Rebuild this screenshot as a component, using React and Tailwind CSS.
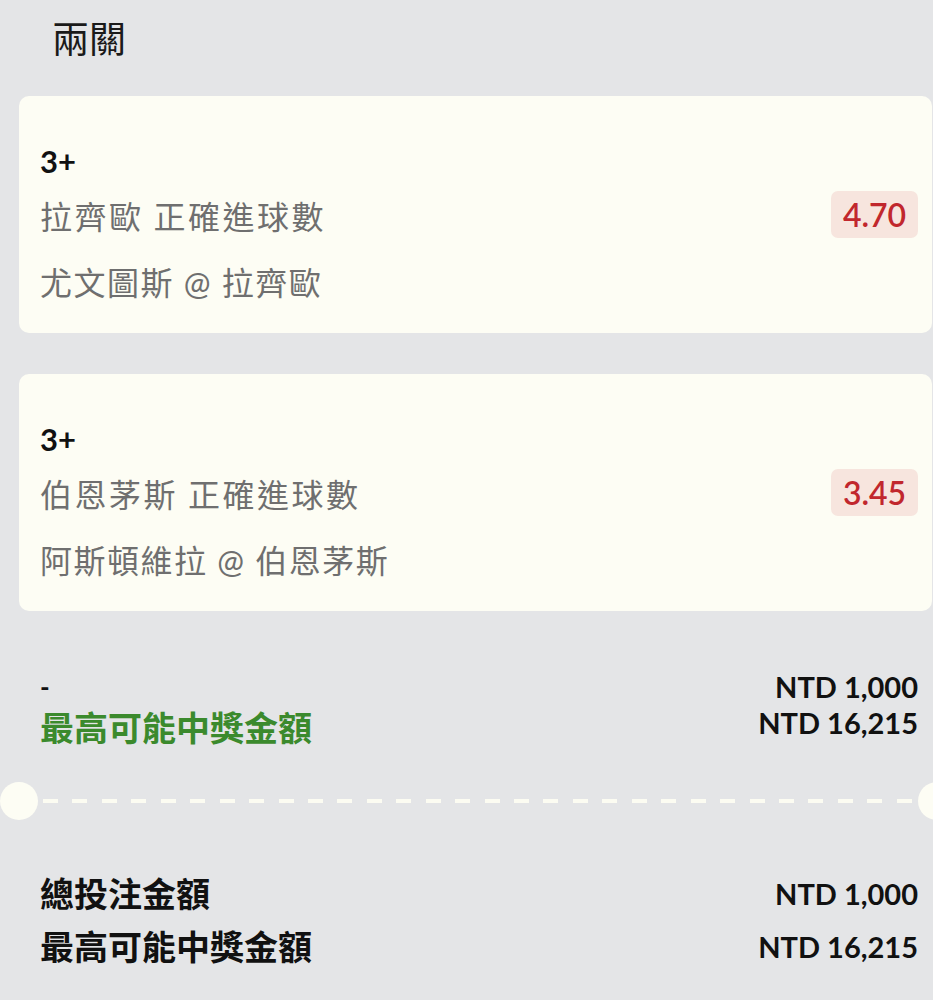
import React from "react";

const font = { fontFamily: 'Lato, "Noto Sans CJK TC", sans-serif' };

function Leg({ team, market, match, odds }) {
  return (
    <div className="ml-[19px] mr-[1px] flex items-center rounded-[10px] bg-[#fdfdf4] pl-[21px] pr-[14px]">
      <div className="flex flex-1 flex-col pt-[45px] pb-[20px]">
        <div className="h-[40px] text-[31px] font-bold leading-[40px] text-[#111111]">3+</div>
        <div className="h-[72px] text-[32px] leading-[72px] tracking-[2.5px] text-[#6f6f6f]">
          <span className="mr-[10px]">{team}</span>
          <span>{market}</span>
        </div>
        <div className="h-[60px] text-[32px] leading-[60px] tracking-[1.5px] text-[#6f6f6f]">{match}</div>
      </div>
      <div className="flex h-[47px] w-[87px] items-center justify-center rounded-[7px] bg-[#f7e5de] text-[32px] font-semibold text-[#c1272d]">
        {odds}
      </div>
    </div>
  );
}

export default function App() {
  const dashes = Array.from({ length: 30 });
  return (
    <div style={font} className="min-h-[1000px] w-full overflow-hidden bg-[#e4e5e7]">
      <div className="flex h-[78px] items-center pl-[52px] text-[37px] text-[#1a1a1a]">兩關</div>
      <div className="mt-[18px]">
        <Leg team="拉齊歐" market="正確進球數" match="尤文圖斯 @ 拉齊歐" odds="4.70" />
      </div>
      <div className="mt-[41px]">
        <Leg team="伯恩茅斯" market="正確進球數" match="阿斯頓維拉 @ 伯恩茅斯" odds="3.45" />
      </div>

      <div className="mt-[56px] pl-[40px] pr-[15px]">
        <div className="flex h-[40px] items-center justify-between">
          <span className="text-[26px] font-bold text-[#111111]">-</span>
          <span className="text-[29px] font-bold text-[#111111]">NTD 1,000</span>
        </div>
        <div className="flex h-[40px] items-center justify-between">
          <span className="text-[34px] font-bold text-[#3b8a2d]">最高可能中獎金額</span>
          <span className="-mt-[8px] text-[29px] font-bold text-[#111111]">NTD 16,215</span>
        </div>
      </div>

      <div className="mt-[35px] flex items-center">
        <div className="h-[38px] w-[38px] shrink-0 rounded-full bg-[#fdfdf4]" />
        <div className="ml-[5px] mr-[6px] flex flex-1 justify-between">
          {dashes.map((_, i) => (
            <div key={i} className="h-[4px] w-[15px] bg-[#fcfcf2]" />
          ))}
        </div>
        <div className="-mr-[23px] h-[38px] w-[38px] shrink-0 rounded-full bg-[#fdfdf4]" />
      </div>

      <div className="mt-[47px] pl-[40px] pr-[15px] text-[#111111]">
        <div className="flex h-[53px] items-center justify-between">
          <span className="text-[34px] font-bold">總投注金額</span>
          <span className="text-[29px] font-bold">NTD 1,000</span>
        </div>
        <div className="flex h-[53px] items-center justify-between">
          <span className="text-[34px] font-bold">最高可能中獎金額</span>
          <span className="text-[29px] font-bold">NTD 16,215</span>
        </div>
      </div>
    </div>
  );
}
